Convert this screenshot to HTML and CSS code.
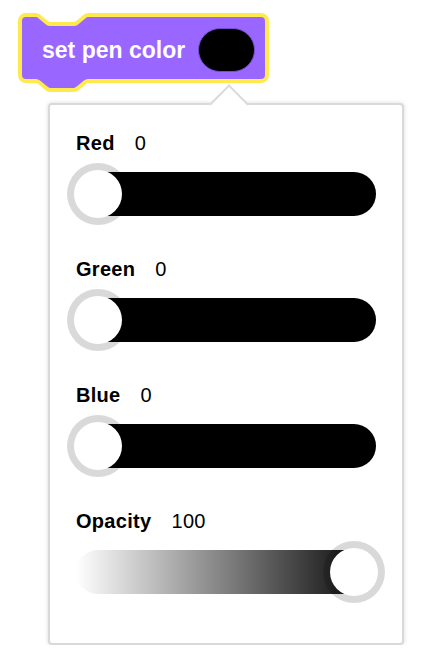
FILE: index.html
```html
<!DOCTYPE html>
<html lang="en">
<head>
    <meta charset="UTF-8">
    <meta name="viewport" content="width=device-width, initial-scale=1.0">
    <title>Set pen color</title>
    <link rel="stylesheet" href="styles.css">
</head>
<body>
    <div class="stage">
        <!-- Block -->
        <div class="block">
            <svg class="block-shape" width="254" height="84" viewBox="0 0 254 84">
                <path d="M 3 9 A 6 6 0 0 1 9 3 H 19 C 21 3 22 4 23 5 L 29 10 C 30 11 31 12 33 12 H 57 C 59 12 60 11 61 10 L 67 5 C 68 4 69 3 71 3 H 244 A 6 6 0 0 1 250 9 V 63 A 6 6 0 0 1 244 69 H 71 C 69 69 68 70 67 71 L 61 76 C 60 77 59 78 57 78 H 33 C 31 78 30 77 29 76 L 23 71 C 22 70 21 69 19 69 H 9 A 6 6 0 0 1 3 63 Z" />
            </svg>
            <span class="block-text">set pen color</span>
            <span class="swatch"></span>
        </div>

        <!-- Color picker popup -->
        <div class="popup">
            <div class="arrow"></div>

            <div class="field">
                <div class="field-label"><b>Red</b><span>0</span></div>
                <div class="slider solid">
                    <div class="rail"><div class="handle" style="left: 0%"></div></div>
                </div>
            </div>

            <div class="field">
                <div class="field-label"><b>Green</b><span>0</span></div>
                <div class="slider solid">
                    <div class="rail"><div class="handle" style="left: 0%"></div></div>
                </div>
            </div>

            <div class="field">
                <div class="field-label"><b>Blue</b><span>0</span></div>
                <div class="slider solid">
                    <div class="rail"><div class="handle" style="left: 0%"></div></div>
                </div>
            </div>

            <div class="field">
                <div class="field-label"><b>Opacity</b><span>100</span></div>
                <div class="slider fade">
                    <div class="rail"><div class="handle" style="left: 100%"></div></div>
                </div>
            </div>
        </div>
    </div>
</body>
</html>
```

FILE: styles.css
```css
body {
    margin: 0;
    background: #fff;
    font-family: 'Liberation Sans', Arial, sans-serif;
    color: #000;
}

.stage {
    padding: 12px 0 0 17px;
}

/* Block */
.block {
    position: relative;
    box-sizing: border-box;
    width: 254px;
    height: 70px;
    padding: 6px 14px 0 25px;
    display: flex;
    align-items: center;
    gap: 13px;
}

.block-shape {
    position: absolute;
    top: 0;
    left: 0;
    overflow: visible;
}

    .block-shape path {
        fill: #9966ff;
        stroke: #ffea4d;
        stroke-width: 4;
        stroke-linejoin: round;
    }

.block-text {
    position: relative;
    font-size: 23px;
    font-weight: bold;
    color: #fff;
    white-space: nowrap;
}

.swatch {
    position: relative;
    box-sizing: border-box;
    width: 57px;
    height: 44px;
    border-radius: 22px;
    background: #000;
    border: 1px solid #774dcb;
}

/* Popup */
.popup {
    position: relative;
    box-sizing: border-box;
    width: 356px;
    height: 542px;
    margin: 21px 0 0 31px;
    padding: 26px 26px 0 26px;
    background: #fff;
    border: 2px solid #d9d9d9;
    border-radius: 4px;
    box-shadow: 0 0 4px rgba(0, 0, 0, 0.15);
}

.arrow {
    position: absolute;
    top: -15px;
    left: 165px;
    box-sizing: border-box;
    width: 28px;
    height: 28px;
    background: #fff;
    border-top: 2px solid #d9d9d9;
    border-left: 2px solid #d9d9d9;
    transform: rotate(45deg);
}

.field {
    margin-bottom: 41px;
}

.field-label {
    display: flex;
    gap: 20px;
    font-size: 20px;
    line-height: 24px;
    letter-spacing: 0.3px;
    margin-bottom: 17px;
}

/* Sliders */
.slider {
    position: relative;
    width: 300px;
    height: 44px;
    border-radius: 22px;
}

    .slider.solid {
        background: #000;
    }

    .slider.fade {
        background: linear-gradient(to right, rgba(0, 0, 0, 0), #000);
    }

.rail {
    position: absolute;
    left: 22px;
    right: 22px;
    top: 50%;
}

.handle {
    position: absolute;
    top: 0;
    width: 48px;
    height: 48px;
    border-radius: 50%;
    background: #fff;
    box-shadow: 0 0 0 7px rgba(0, 0, 0, 0.15);
    transform: translate(-50%, -50%);
}
```
